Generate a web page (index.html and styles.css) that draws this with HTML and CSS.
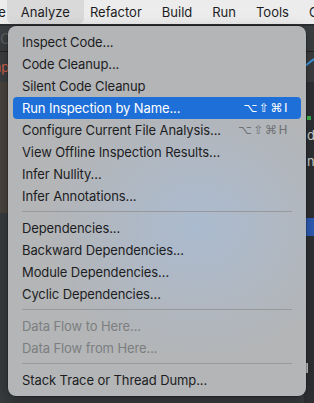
FILE: index.html
```html
<!DOCTYPE html>
<html>
<head>
  <title>Analyze Menu</title>
  <link rel="stylesheet" href="styles.css">
</head>
<body>
  <div class="menubar">
    <span class="menubar-item menubar-cut">Code</span>
    <span class="menubar-item active">Analyze</span>
    <span class="menubar-item">Refactor</span>
    <span class="menubar-item">Build</span>
    <span class="menubar-item">Run</span>
    <span class="menubar-item">Tools</span>
    <span class="menubar-item">Code</span>
  </div>

  <div class="workspace">
    <div class="side side-left">
      <div class="side-block toolbar"><span class="ghost">C</span></div>
      <div class="side-block tabs"><span class="error-text">ap</span></div>
      <div class="side-block editor"></div>
      <div class="side-block rest"></div>
    </div>
    <div class="side side-right">
      <div class="side-block toolbar"></div>
      <div class="side-block tabs">
        <svg class="check" width="12" height="10" viewBox="0 0 12 10"><path d="M1 9 L10 2" stroke="#3d9be9" stroke-width="2" fill="none"/></svg>
      </div>
      <div class="side-block code">
        <span class="green-mark"></span>
        <span class="code-letter">d</span>
        <span class="code-letter">n</span>
      </div>
      <div class="side-block selected-line"></div>
      <div class="side-block rest"><span class="scroll-thumb"></span></div>
    </div>

    <div class="menu">
      <div class="menu-item">Inspect Code...</div>
      <div class="menu-item">Code Cleanup...</div>
      <div class="menu-item">Silent Code Cleanup</div>
      <div class="menu-item selected">
        <span>Run Inspection by Name...</span>
        <span class="shortcut">⌥⇧⌘I</span>
      </div>
      <div class="menu-item">
        <span>Configure Current File Analysis...</span>
        <span class="shortcut">⌥⇧⌘H</span>
      </div>
      <div class="menu-item">View Offline Inspection Results...</div>
      <div class="menu-item">Infer Nullity...</div>
      <div class="menu-item">Infer Annotations...</div>
      <div class="separator"></div>
      <div class="menu-item">Dependencies...</div>
      <div class="menu-item">Backward Dependencies...</div>
      <div class="menu-item">Module Dependencies...</div>
      <div class="menu-item">Cyclic Dependencies...</div>
      <div class="separator"></div>
      <div class="menu-item disabled">Data Flow to Here...</div>
      <div class="menu-item disabled">Data Flow from Here...</div>
      <div class="separator"></div>
      <div class="menu-item">Stack Trace or Thread Dump...</div>
    </div>
  </div>
</body>
</html>
```

FILE: styles.css
```css
:root {
  --menubar-bg: #ececec;
  --menubar-active: #d9d9d9;
  --ide-bg: #3a3d40;
  --ide-dark: #2b2d30;
  --menu-bg: #b3b5b7;
  --text-primary: #1d1d1f;
  --text-disabled: #7c7e80;
  --accent: #1f6fd8;
  --separator: #97999b;
}

body {
  margin: 0;
  width: 314px;
  height: 403px;
  overflow: hidden;
  background-color: var(--ide-bg);
  font-family: 'Inter', 'Liberation Sans', sans-serif;
}

.menubar {
  display: flex;
  align-items: stretch;
  height: 24px;
  background-color: var(--menubar-bg);
  border-bottom: 2px solid var(--ide-dark);
  font-size: 13px;
  color: var(--text-primary);
  white-space: nowrap;
  overflow: hidden;
}

.menubar-item {
  display: flex;
  align-items: center;
  padding: 0 10px;
}

.menubar-cut {
  margin-left: -37px;
  padding-right: 5px;
}

.menubar-item.active {
  background-color: var(--menubar-active);
  border-radius: 0 0 6px 6px;
  padding: 0 14px;
  margin: 0 -4px;
}

.workspace {
  position: relative;
  display: flex;
  justify-content: space-between;
  height: 377px;
}

.side {
  width: 10px;
  display: flex;
  flex-direction: column;
  font-size: 13px;
  overflow: hidden;
}

.side-block {
  position: relative;
}

.toolbar {
  height: 25px;
  background-color: #3c3f41;
  border-bottom: 1px solid #232425;
}

.ghost {
  display: block;
  padding: 3px 0 0 0;
  color: #5c5f62;
  font-size: 15px;
}

.tabs {
  height: 30px;
  background-color: #3c3f41;
}

.error-text {
  display: block;
  margin-left: -6px;
  padding-top: 7px;
  color: #d5664f;
}

.side-left .editor {
  height: 131px;
  background-color: #4a443d;
}

.side-left .rest {
  flex: 1;
  background-color: #393c3f;
}

.check {
  margin: 5px 0 0 0;
}

.side-right .code {
  height: 136px;
  background-color: #2f3134;
  display: flex;
  flex-direction: column;
  gap: 4px;
  padding-top: 34px;
  box-sizing: border-box;
}

.green-mark {
  display: block;
  width: 4px;
  height: 4px;
  margin-left: 3px;
  background-color: #3fb950;
}

.code-letter {
  color: #d8d8d8;
  padding-left: 3px;
  line-height: 22px;
}

.selected-line {
  height: 18px;
  background-color: #2f5fb8;
}

.side-right .rest {
  flex: 1;
  background-color: #2f3134;
}

.scroll-thumb {
  position: absolute;
  top: 127px;
  left: 2px;
  width: 2px;
  height: 10px;
  background-color: #c8c8c8;
}

/* dropdown sits over the editor */
.menu {
  position: absolute;
  top: 0;
  left: 8px;
  width: 298px;
  box-sizing: border-box;
  padding: 5px;
  border-radius: 8px;
  background-color: var(--menu-bg);
  background-image: radial-gradient(ellipse 150px 130px at 190px 200px, rgba(170, 188, 212, 0.85), rgba(170, 188, 212, 0) 100%);
  box-shadow: 0 0 0 0.5px rgba(0, 0, 0, 0.4), 0 6px 16px rgba(0, 0, 0, 0.35);
  font-size: 13px;
  letter-spacing: -0.1px;
  color: var(--text-primary);
}

.menu-item {
  display: flex;
  justify-content: space-between;
  align-items: center;
  height: 22px;
  padding: 0 12px 0 9px;
  border-radius: 4px;
  white-space: nowrap;
}

.menu-item.selected {
  background-color: var(--accent);
  color: #ffffff;
}

.menu-item.disabled {
  color: var(--text-disabled);
}

.shortcut {
  font-family: 'DejaVu Sans', sans-serif;
  font-size: 12px;
  letter-spacing: 1.5px;
  color: #6f7173;
}

.selected .shortcut {
  color: #ffffff;
}

.separator {
  height: 1px;
  margin: 4px 9px 5px 9px;
  background-color: var(--separator);
}
```
